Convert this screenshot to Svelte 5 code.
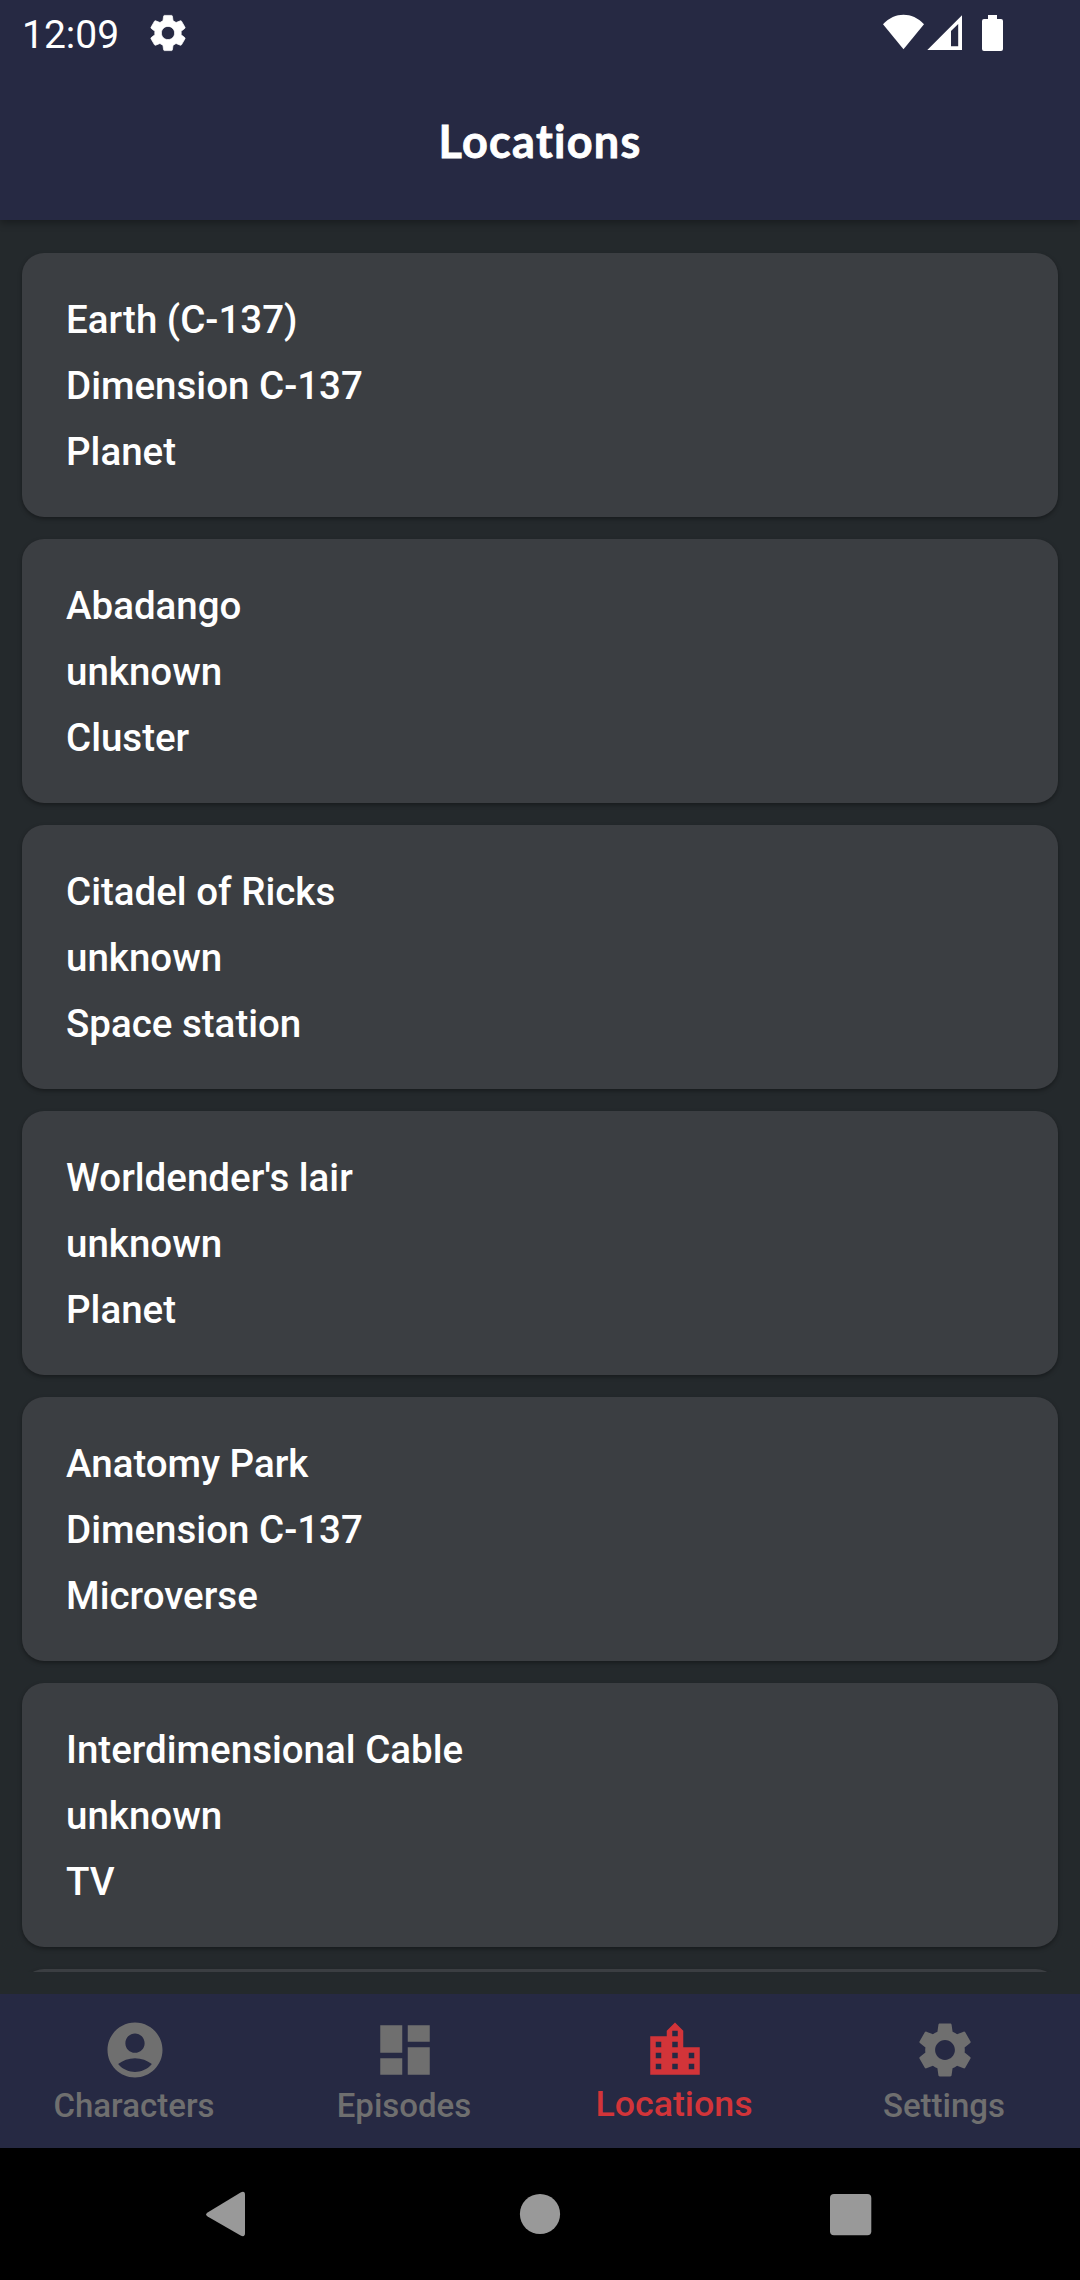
<script>
  const locations = [
    { name: 'Earth (C-137)', dimension: 'Dimension C-137', type: 'Planet' },
    { name: 'Abadango', dimension: 'unknown', type: 'Cluster' },
    { name: 'Citadel of Ricks', dimension: 'unknown', type: 'Space station' },
    { name: "Worldender's lair", dimension: 'unknown', type: 'Planet' },
    { name: 'Anatomy Park', dimension: 'Dimension C-137', type: 'Microverse' },
    { name: 'Interdimensional Cable', dimension: 'unknown', type: 'TV' }
  ];

  const gear =
    'M19.14 12.94c.04-.3.06-.61.06-.94 0-.32-.02-.64-.07-.94l2.03-1.58c.18-.14.23-.41.12-.61l-1.92-3.32c-.12-.22-.37-.29-.59-.22l-2.39.96c-.5-.38-1.03-.7-1.62-.94l-.36-2.54c-.04-.24-.24-.41-.48-.41h-3.84c-.24 0-.43.17-.47.41l-.36 2.54c-.59.24-1.13.57-1.62.94l-2.39-.96c-.22-.08-.47 0-.59.22L2.74 8.87c-.12.21-.08.47.12.61l2.03 1.58c-.05.3-.09.63-.09.94s.02.64.07.94l-2.03 1.58c-.18.14-.23.41-.12.61l1.92 3.32c.12.22.37.29.59.22l2.39-.96c.5.38 1.03.7 1.62.94l.36 2.54c.05.24.24.41.48.41h3.84c.24 0 .44-.17.47-.41l.36-2.54c.59-.24 1.13-.56 1.62-.94l2.39.96c.22.08.47 0 .59-.22l1.92-3.32c.12-.22.07-.47-.12-.61l-2.01-1.58zM12 15.6c-1.98 0-3.6-1.62-3.6-3.6s1.62-3.6 3.6-3.6 3.6 1.62 3.6 3.6-1.62 3.6-3.6 3.6z';

  const tabs = [
    {
      label: 'Characters',
      icon: 'M12 2C6.48 2 2 6.48 2 12s4.48 10 10 10 10-4.48 10-10S17.52 2 12 2zm0 4c1.93 0 3.5 1.57 3.5 3.5S13.93 13 12 13s-3.5-1.57-3.5-3.5S10.07 6 12 6zm0 14c-2.03 0-4.43-.82-6.14-2.88C7.55 15.8 9.68 15 12 15s4.45.8 6.14 2.12C16.43 19.18 14.03 20 12 20z'
    },
    {
      label: 'Episodes',
      icon: 'M3 13h8V3H3v10zm0 8h8v-6H3v6zm10 0h8V11h-8v10zm0-18v6h8V3h-8z'
    },
    {
      label: 'Locations',
      active: true,
      icon: 'M15 11V5l-3-3-3 3v2H3v14h18V11h-6zm-8 8H5v-2h2v2zm0-4H5v-2h2v2zm0-4H5V9h2v2zm6 8h-2v-2h2v2zm0-4h-2v-2h2v2zm0-4h-2V9h2v2zm0-4h-2V5h2v2zm6 12h-2v-2h2v2zm0-4h-2v-2h2v2z'
    },
    { label: 'Settings', icon: gear }
  ];
</script>

<div class="screen">
  <header>
    <div class="status">
      <span class="clock">12:09</span>
      <svg class="status-gear" viewBox="0 0 24 24"><path d={gear} /></svg>
      <svg class="signals" viewBox="0 0 122 38">
        <path d="M1 10.3C13-2.3 30-2.3 42 10.3L21.5 35.3z" />
        <path fill-rule="evenodd" d="M45.3 36L80 1.2V36zM69 17v15.2h7.2V10z" />
        <path d="M106 1h9v4h4a2 2 0 0 1 2 2v28a2 2 0 0 1-2 2h-17a2 2 0 0 1-2-2V7a2 2 0 0 1 2-2h4z" />
      </svg>
    </div>
    <h1>Locations</h1>
  </header>

  <main>
    <div class="list">
      {#each locations as location}
        <article class="card">
          <p>{location.name}</p>
          <p>{location.dimension}</p>
          <p>{location.type}</p>
        </article>
      {/each}
      <article class="card"></article>
    </div>
  </main>

  <nav class="tabs">
    {#each tabs as tab}
      <div class="tab" class:active={tab.active}>
        <svg viewBox="0 0 24 24"><path d={tab.icon} /></svg>
        <span>{tab.label}</span>
      </div>
    {/each}
  </nav>

  <div class="system">
    <svg viewBox="0 0 48 48"><path d="M2.6 22.5L35.6 2.5Q40 .4 40 5V43Q40 47.6 35.6 45.5L2.6 26.5Q-.4 24.5 2.6 22.5z" /></svg>
    <svg viewBox="0 0 48 48"><circle cx="24" cy="24" r="20.1" /></svg>
    <svg viewBox="0 0 48 48"><rect x="3" y="4" width="41.3" height="41.3" rx="4" /></svg>
  </div>
</div>

<style>
  :global(body) {
    margin: 0;
    background: #24292c;
  }

  .screen {
    display: flex;
    flex-direction: column;
    width: 1080px;
    height: 2280px;
    overflow: hidden;
    background: #24292c;
    font-family: Roboto, 'Liberation Sans', sans-serif;
  }

  header {
    position: relative;
    z-index: 1;
    flex: none;
    height: 220px;
    background: #262943;
    color: #fff;
    box-shadow: 0 3px 8px rgba(0, 0, 0, 0.32);
  }

  .status {
    display: flex;
    align-items: center;
    box-sizing: border-box;
    height: 66px;
    padding: 0 76px 0 22px;
    fill: #fff;
  }

  .clock {
    width: 124px;
    font-size: 39px;
    line-height: 46px;
    padding-top: 3px;
  }

  .status-gear {
    width: 44px;
    height: 44px;
    stroke: #fff;
    stroke-width: 0.4px;
  }

  .signals {
    width: 122px;
    height: 38px;
    margin-left: auto;
  }

  h1 {
    margin: 0;
    height: 154px;
    line-height: 151px;
    text-align: center;
    font-family: Lato, sans-serif;
    font-size: 45px;
    font-weight: 700;
    font-variant-ligatures: none;
    letter-spacing: 1.3px;
    -webkit-text-stroke: 0.8px #fff;
  }

  main {
    flex: none;
    box-sizing: border-box;
    height: 1774px;
    padding: 11px 0 22px;
  }

  .list {
    display: flex;
    flex-direction: column;
    gap: 22px;
    box-sizing: border-box;
    height: 1741px;
    padding: 22px 22px 0;
    overflow: hidden;
  }

  .card {
    flex: none;
    box-sizing: border-box;
    height: 264px;
    padding: 34px 44px 32px;
    border-radius: 22px;
    background: #3b3e42;
    box-shadow: 0 2px 4px rgba(0, 0, 0, 0.35);
  }

  .card p {
    margin: 0;
    height: 66px;
    line-height: 66px;
    color: #fff;
    font-size: 38.5px;
    font-weight: 500;
  }

  .tabs {
    display: flex;
    flex: none;
    height: 154px;
    background: #262943;
  }

  .tab {
    display: flex;
    flex: 1;
    flex-direction: column;
    align-items: center;
    box-sizing: border-box;
    padding-top: 23px;
    color: #6f6f6f;
    fill: currentColor;
    font-size: 33px;
    font-weight: 500;
    line-height: 40px;
  }

  .tab svg {
    width: 66px;
    height: 66px;
    margin-bottom: 3px;
  }

  .tab span {
    padding-right: 2px;
  }

  .active {
    color: #d23439;
    font-size: 35.75px;
  }

  .tab.active svg {
    margin-bottom: 1px;
  }

  .system {
    display: flex;
    flex: none;
    align-items: center;
    justify-content: space-between;
    box-sizing: border-box;
    height: 132px;
    padding: 0 205px;
    background: #000;
    fill: #999;
  }

  .system svg {
    width: 48px;
    height: 48px;
  }
</style>
